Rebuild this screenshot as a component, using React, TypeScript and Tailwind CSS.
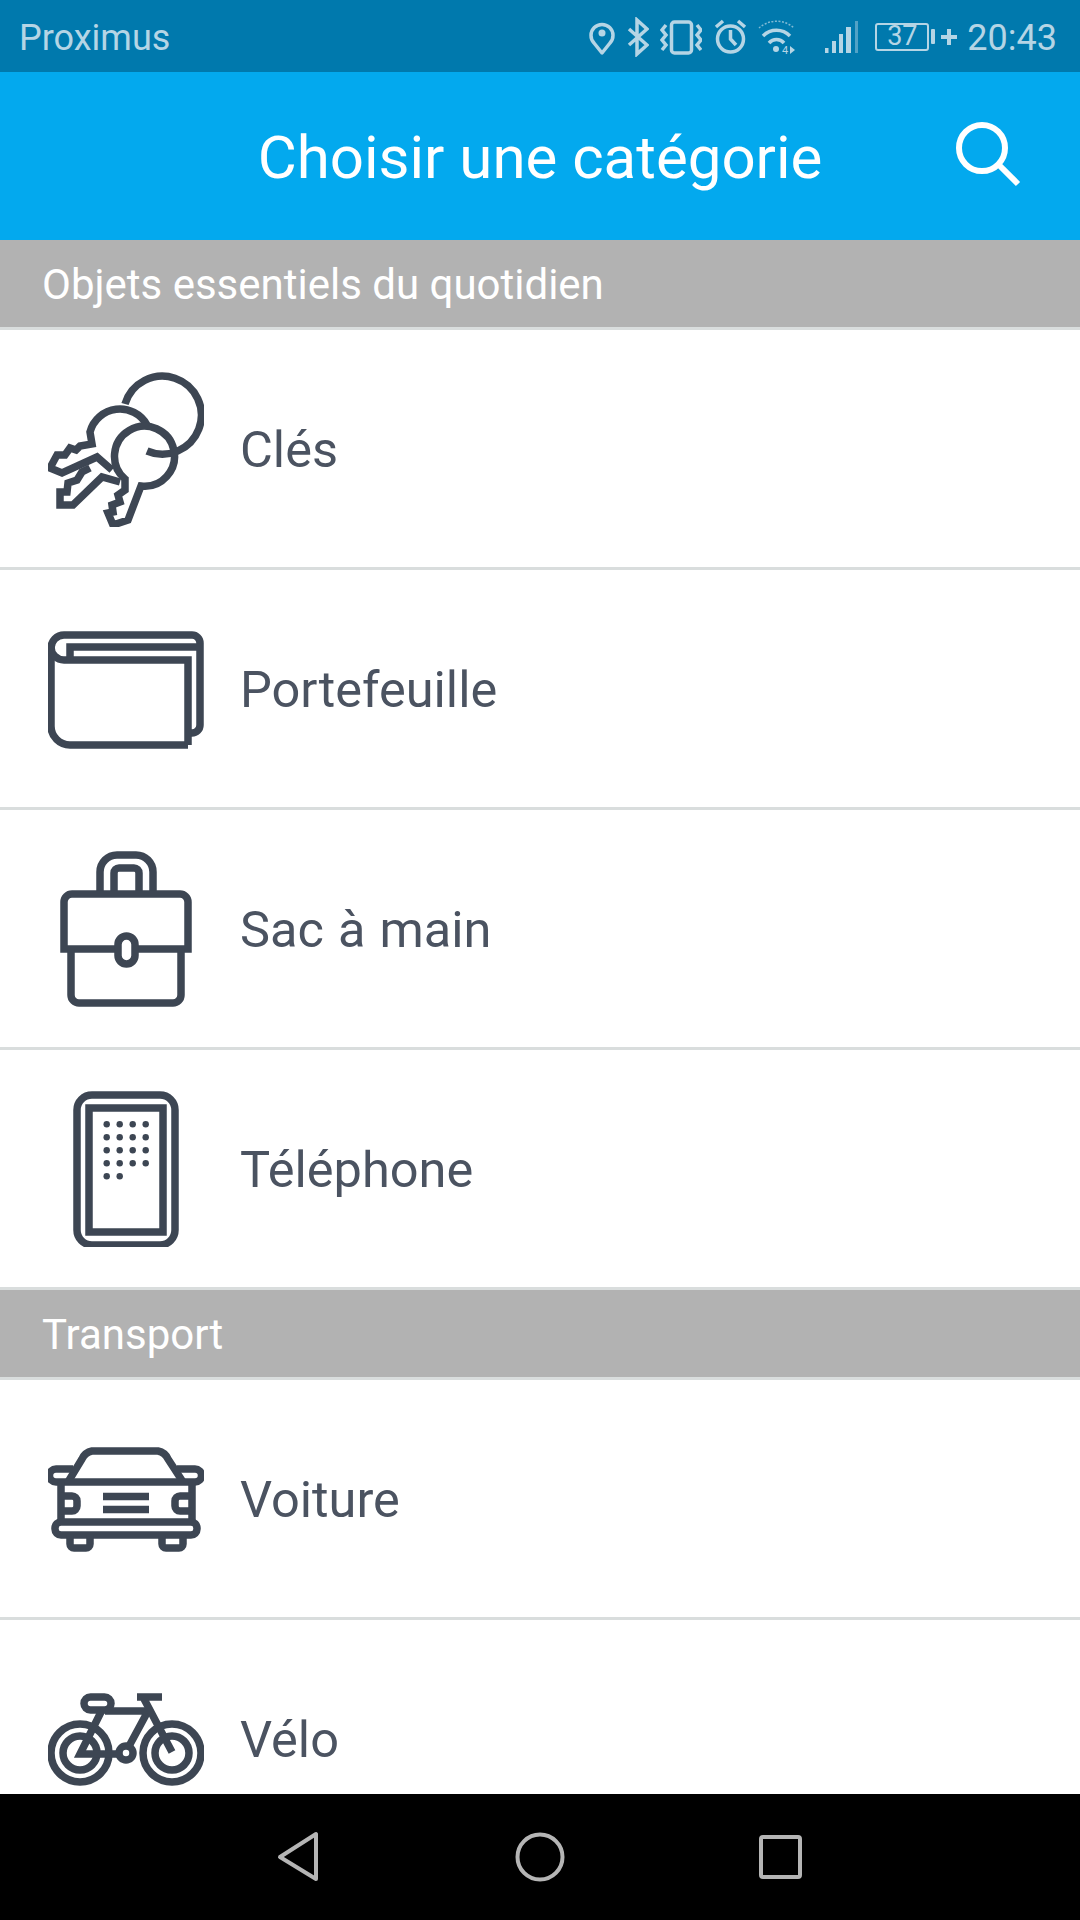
import type { ReactNode } from 'react';

const INK = '#3d4653';

// Line-art category icons, all drawn on the same 156px square
function CategoryIcon({ box, children }: { box: string; children: ReactNode }) {
  return (
    <svg width="156" height="156" viewBox={box} fill="none" stroke={INK} strokeWidth="7.5" className="shrink-0">
      {children}
    </svg>
  );
}

const KeysIcon = () => (
  <CategoryIcon box="18 21 156 156">
    <path d="M95 54A39 39 0 1 1 117 101" />
    <path d="M117 75A31 31 0 0 0 60 82L62 94L50 96L46 100L40 98L35 105L27 105L20 118L32 123L67 107L82 120" />
    <path d="M60 118L52 122L47 130L38 133L37 142L30 142L30 155L43 155L72 127L90 132" />
    <path d="M95 129A30 30 0 1 1 111 136L98 170L83 175L78 163L83 162L82 155L90 152L88 145L95 140Z" />
  </CategoryIcon>
);

const WalletIcon = () => (
  <CategoryIcon box="18 1 156 156">
    <path d="M158 135H40A19 19 0 0 1 21 116V38A13 13 0 0 1 34 25H162A8 8 0 0 1 170 33V115A8 8 0 0 1 162 123H158" />
    <path d="M21 37A13 13 0 0 0 34 50H158V135" />
    <path d="M40 50V37H170" />
  </CategoryIcon>
);

const BagIcon = () => (
  <CategoryIcon box="8 11 156 156">
    <path d="M60 52V32A17 17 0 0 1 77 15H96A17 17 0 0 1 113 32V52" />
    <path d="M74 52V33A5 5 0 0 1 79 28H94A5 5 0 0 1 99 33V52" />
    <path d="M78 109H24V62A8 8 0 0 1 32 54H140A8 8 0 0 1 148 62V109H95" />
    <rect x="78" y="96" width="17" height="28" rx="8.5" />
    <path d="M31 109V155A8 8 0 0 0 39 163H133A8 8 0 0 0 141 155V109" />
  </CategoryIcon>
);

const PHONE_DOTS = [
  [0, 0], [1, 0], [2, 0], [3, 0],
  [0, 1], [1, 1], [2, 1], [3, 1],
  [0, 2], [1, 2], [2, 2], [3, 2],
  [0, 3], [1, 3], [2, 3], [3, 3],
  [0, 4], [1, 4],
];

const PhoneIcon = () => (
  <CategoryIcon box="-2 11 156 156">
    <rect x="27" y="15" width="98" height="150" rx="15" />
    <rect x="39" y="28" width="74" height="124" />
    {PHONE_DOTS.map(([c, r]) => (
      <circle key={`${c}-${r}`} cx={56.7 + c * 13} cy={44.3 + r * 13} r="3.2" fill={INK} stroke="none" />
    ))}
  </CategoryIcon>
);

const CarIcon = () => (
  <CategoryIcon box="18 -9 156 156">
    <path d="M38 52L52 29A14 14 0 0 1 62 21H128A14 14 0 0 1 138 29L153 52" />
    <path d="M43 39H26A6.5 6.5 0 0 0 26 52H165A6.5 6.5 0 0 0 165 39H147" />
    <path d="M31 52V92M162 52V92" />
    <path d="M31 66H42A5 5 0 0 1 47 71V76A5 5 0 0 1 42 81H31" />
    <path d="M162 66H150A5 5 0 0 0 145 71V76A5 5 0 0 0 150 81H162" />
    <path d="M73 66.5H119M73 79.5H119" />
    <rect x="25" y="92" width="142" height="13" rx="6" />
    <path d="M40 105V114A4 4 0 0 0 44 118H56A4 4 0 0 0 60 114V105" />
    <path d="M132 105V114A4 4 0 0 0 136 118H149A4 4 0 0 0 153 114V105" />
  </CategoryIcon>
);

const BikeIcon = () => (
  <CategoryIcon box="18 -9 156 156">
    <circle cx="50" cy="83" r="29" />
    <circle cx="50" cy="83" r="17" />
    <circle cx="142" cy="83" r="29" />
    <circle cx="142" cy="83" r="17" />
    <circle cx="96" cy="83" r="7" />
    <rect x="54" y="27" width="27" height="13" rx="6.5" />
    <path d="M72 40L50 84H90" />
    <path d="M75 41H118M118 41L98 78" />
    <path d="M107 27H132M113 27L142 82" />
  </CategoryIcon>
);

const CATEGORIES = [
  {
    title: 'Objets essentiels du quotidien',
    items: [
      { label: 'Clés', icon: <KeysIcon /> },
      { label: 'Portefeuille', icon: <WalletIcon /> },
      { label: 'Sac à main', icon: <BagIcon /> },
      { label: 'Téléphone', icon: <PhoneIcon /> },
    ],
  },
  {
    title: 'Transport',
    items: [
      { label: 'Voiture', icon: <CarIcon /> },
      { label: 'Vélo', icon: <BikeIcon /> },
    ],
  },
];

const STATUS = '#b5d5e5';

function StatusGlyph({ w, children }: { w: number; children: ReactNode }) {
  return (
    <svg width={w} height="40" viewBox={`0 0 ${w} 40`} fill="none" stroke={STATUS} strokeWidth="3.5" className="shrink-0">
      {children}
    </svg>
  );
}

function StatusBar() {
  return (
    <div className="h-[72px] bg-[#0079ad] flex items-center pl-[19px] text-[#b5d5e5] text-[36px] shrink-0">
      <span className="pt-[3px]">Proximus</span>
      <div className="ml-auto flex items-center pt-[1px]">
        {/* location */}
        <StatusGlyph w={26}>
          <path d="M13 36L5 26A11 11 0 1 1 21 26Z" strokeLinejoin="round" />
          <circle cx="13" cy="16" r="3.5" fill={STATUS} stroke="none" />
        </StatusGlyph>
        {/* bluetooth */}
        <div className="ml-[12px]">
          <StatusGlyph w={22}>
            <path d="M2 12L20 28L10 37V3L20 12L2 28" />
          </StatusGlyph>
        </div>
        {/* vibrate */}
        <div className="ml-[11px]">
          <StatusGlyph w={42}>
            <rect x="11.5" y="5" width="20" height="31" rx="3" />
            <path d="M6 8L2 13L6 18L2 23L6 28L2 33M37 8L41 13L37 18L41 23L37 28L41 33" />
          </StatusGlyph>
        </div>
        {/* alarm */}
        <div className="ml-[12px]">
          <StatusGlyph w={33}>
            <circle cx="16.5" cy="22" r="13" />
            <path d="M16.5 13V22L22 28M2 10L9 4M31 10L24 4" />
          </StatusGlyph>
        </div>
        {/* wifi */}
        <div className="ml-[10px]">
          <StatusGlyph w={40}>
            <path d="M2 11A26 26 0 0 1 37 11" strokeWidth="1.5" strokeDasharray="2 1.5" opacity="0.7" />
            <path d="M6 19A19 19 0 0 1 33 19M12 26A10 10 0 0 1 27 26" />
            <circle cx="19" cy="32" r="3" fill={STATUS} stroke="none" />
            <text x="25" y="37" fontSize="11" fill={STATUS} stroke="none" fontFamily="Roboto, sans-serif">4</text>
            <path d="M33 29L38 33L33 37Z" fill={STATUS} stroke="none" />
          </StatusGlyph>
        </div>
        {/* signal */}
        <div className="ml-[27px]">
          <svg width="35" height="40" viewBox="0 0 35 40" fill={STATUS} className="shrink-0">
            <rect x="1" y="31" width="3.5" height="5" />
            <rect x="8" y="24" width="4" height="12" />
            <rect x="15" y="17" width="4" height="19" />
            <rect x="22" y="10" width="5" height="26" />
            <rect x="31" y="4" width="3" height="32" opacity="0.45" />
          </svg>
        </div>
        {/* battery */}
        <div className="ml-[16px] w-[54px] h-[28px] border-2 border-[#b5d5e5] rounded-[3px] flex items-center justify-center text-[27px] leading-none">
          37
        </div>
        <div className="ml-[2px] w-[4px] h-[15px] bg-[#b5d5e5] rounded-[1px]" />
        <svg width="16" height="16" viewBox="0 0 16 16" stroke={STATUS} strokeWidth="4" className="ml-[6px] shrink-0">
          <path d="M0 8H16M8 0V16" />
        </svg>
        <span className="ml-[10px] mr-[23px] pt-[2px]">20:43</span>
      </div>
    </div>
  );
}

function NavBar() {
  return (
    <div className="h-[126px] bg-black flex items-start pt-[31px] pl-[274px] shrink-0">
      <svg width="48" height="64" viewBox="0 0 48 64" fill="none" stroke="#b5b5b5" strokeWidth="4" strokeLinejoin="round">
        <path d="M42 9V54L6 32Z" />
      </svg>
      <svg width="56" height="64" viewBox="0 0 56 64" fill="none" stroke="#b5b5b5" strokeWidth="4" className="ml-[190px]">
        <circle cx="28" cy="32" r="22.5" />
      </svg>
      <svg width="52" height="64" viewBox="0 0 52 64" fill="none" stroke="#b5b5b5" strokeWidth="4" className="ml-[186px]">
        <rect x="7" y="12" width="39" height="40" rx="2" />
      </svg>
    </div>
  );
}

export default function App() {
  return (
    <div className="w-[1080px] h-[1920px] flex flex-col bg-white overflow-hidden font-[family-name:Roboto,sans-serif]">
      <StatusBar />

      <header className="h-[168px] bg-[#03a9ee] flex items-center justify-center relative shrink-0">
        <h1 className="text-[60px] font-normal text-white pt-[3px]">Choisir une catégorie</h1>
        <svg width="66" height="66" viewBox="0 0 66 66" fill="none" stroke="#fff" strokeWidth="6" className="absolute left-[955px] top-[49px]">
          <circle cx="27" cy="27" r="23" />
          <path d="M43 43L63 63" />
        </svg>
      </header>

      <main className="flex-1 overflow-hidden">
        {CATEGORIES.map(section => (
          <section key={section.title}>
            <div className="h-[90px] bg-[#b2b2b2] border-b-[3px] border-[#d9dddd] flex items-center pl-[42px] text-white text-[42px]">
              <span className="pt-[1px]">{section.title}</span>
            </div>
            {section.items.map(item => (
              <div key={item.label} className="h-[240px] border-b-[3px] border-[#d9dddd] flex items-center pl-[48px]">
                {item.icon}
                <span className="ml-[36px] pt-[2px] text-[50.5px] [word-spacing:1.5px] text-[#4b5361]">{item.label}</span>
              </div>
            ))}
          </section>
        ))}
      </main>

      <NavBar />
    </div>
  );
}
